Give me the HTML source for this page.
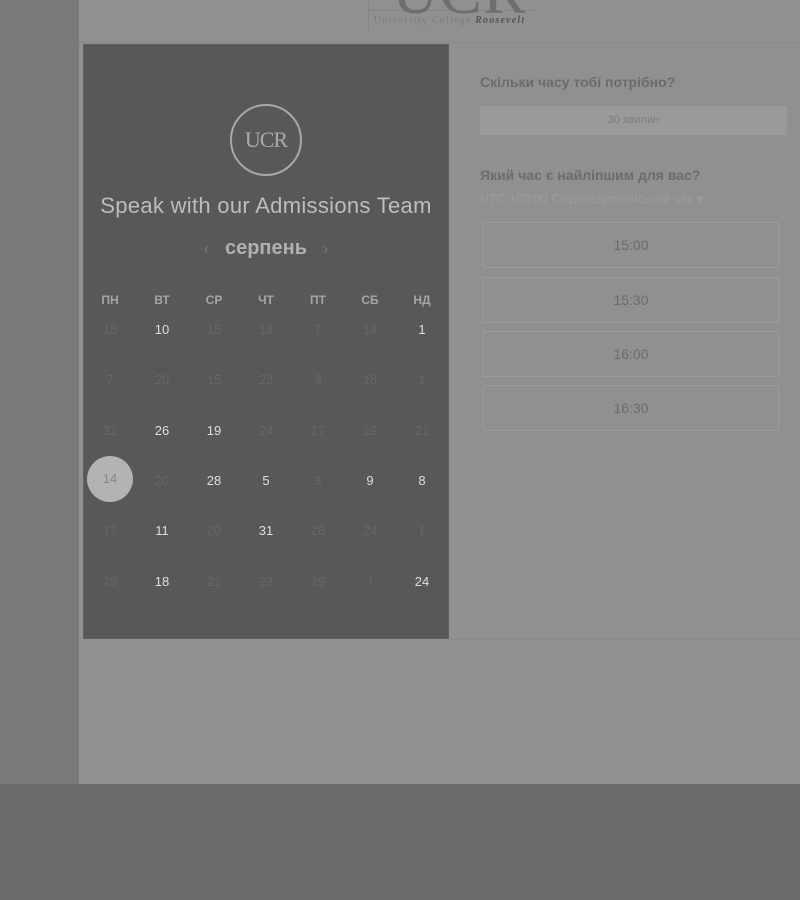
<!DOCTYPE html>
<html><head><meta charset="utf-8"><style>
*{margin:0;padding:0;box-sizing:border-box}
body{width:800px;height:900px;background:#6b6b6b;font-family:"Liberation Sans",sans-serif;position:relative;overflow:hidden}
.left{position:absolute;left:0;top:0;width:79px;height:784px;background:#7a7a7a}
.page{position:absolute;left:79px;top:0;width:721px;height:784px;background:#909090}
.hdr{position:absolute;left:79px;top:0;width:721px;height:43px;border-bottom:1px solid #8a8a8a}
.logo{position:absolute;left:392px;top:-45px;font-family:"Liberation Serif",serif;font-size:64px;color:#6e6e6e;letter-spacing:1px}
.lbox{position:absolute;left:368px;top:-2px;width:168px;height:13px;border-left:1px solid #858585;border-bottom:1px solid #858585}
.lside{position:absolute;left:368px;top:0;width:1px;height:30px;background:#858585}
.logo2{position:absolute;left:374px;top:15px;font-family:"Liberation Serif",serif;font-size:10px;color:#7c7c7c;letter-spacing:1.2px}
.logo2 i{color:#555;font-weight:bold}
.panel{position:absolute;left:83px;top:44px;width:366px;height:595px;background:#585858;border:1px solid #606060}
.circle{position:absolute;left:230px;top:104px;width:72px;height:72px;border:2px solid #a8a8a8;border-radius:50%;color:#aaa;font-family:"Liberation Serif",serif;font-size:22px;text-align:center;line-height:68px;letter-spacing:-1px}
.title{position:absolute;left:83px;width:366px;top:193px;text-align:center;color:#bdbdbd;font-size:22px;letter-spacing:0.3px}
.month{position:absolute;left:83px;width:366px;top:237px;text-align:center;color:#b0b0b0;font-size:20px;font-weight:bold}
.month span{color:#777;font-size:16px;margin:0 16px;font-weight:normal}
.dow,.d{position:absolute;width:40px;margin-left:-20px;text-align:center;font-size:12px}
.dow{top:293px;color:#a5a5a5;font-weight:bold}
.d{color:#666;font-size:13px}
.d.a{color:#dedede}
.sel{position:absolute;left:87px;top:456px;width:46px;height:46px;border-radius:50%;background:#b3b3b3;color:#888;font-size:13px;text-align:center;line-height:46px}
.rt{position:absolute;left:480px;color:#6c6c6c;font-size:14px;font-weight:bold}
.dur{position:absolute;left:480px;top:106px;width:307px;height:29px;background:#9a9a9a;color:#7e7e7e;font-size:11px;text-align:center;line-height:29px}
.tz{position:absolute;left:480px;top:191px;color:#9c9c9c;font-size:12.5px}
.slot{position:absolute;left:483px;width:296px;height:46px;border:1px solid #9c9c9c;border-radius:2px;color:#6c6c6c;font-size:14px;text-align:center;line-height:44px}
.sep{position:absolute;left:449px;top:639px;width:351px;height:1px;background:#8a8a8a}
</style></head><body>
<div class="left"></div><div class="page"></div>
<div class="hdr"></div>
<div class="lbox"></div><div class="lside"></div>
<div class="logo">UCR</div>
<div class="logo2">University College <i>Roosevelt</i></div>
<div class="panel"></div>
<div class="circle">UCR</div>
<div class="title">Speak with our Admissions Team</div>
<div class="month"><span>‹</span>серпень<span>›</span></div>
<div class="dow" style="left:110px">ПН</div><div class="dow" style="left:162px">ВТ</div><div class="dow" style="left:214px">СР</div><div class="dow" style="left:266px">ЧТ</div><div class="dow" style="left:318px">ПТ</div><div class="dow" style="left:370px">СБ</div><div class="dow" style="left:422px">НД</div>
<div class="d" style="left:110px;top:322px">18</div><div class="d a" style="left:162px;top:322px">10</div><div class="d" style="left:214px;top:322px">15</div><div class="d" style="left:266px;top:322px">19</div><div class="d" style="left:318px;top:322px">7</div><div class="d" style="left:370px;top:322px">14</div><div class="d a" style="left:422px;top:322px">1</div>
<div class="d" style="left:110px;top:372px">7</div><div class="d" style="left:162px;top:372px">20</div><div class="d" style="left:214px;top:372px">15</div><div class="d" style="left:266px;top:372px">23</div><div class="d" style="left:318px;top:372px">3</div><div class="d" style="left:370px;top:372px">18</div><div class="d" style="left:422px;top:372px">1</div>
<div class="d" style="left:110px;top:423px">31</div><div class="d a" style="left:162px;top:423px">26</div><div class="d a" style="left:214px;top:423px">19</div><div class="d" style="left:266px;top:423px">24</div><div class="d" style="left:318px;top:423px">17</div><div class="d" style="left:370px;top:423px">19</div><div class="d" style="left:422px;top:423px">21</div>
<div class="sel">14</div><div class="d" style="left:162px;top:473px">20</div><div class="d a" style="left:214px;top:473px">28</div><div class="d a" style="left:266px;top:473px">5</div><div class="d" style="left:318px;top:473px">3</div><div class="d a" style="left:370px;top:473px">9</div><div class="d a" style="left:422px;top:473px">8</div>
<div class="d" style="left:110px;top:523px">17</div><div class="d a" style="left:162px;top:523px">11</div><div class="d" style="left:214px;top:523px">20</div><div class="d a" style="left:266px;top:523px">31</div><div class="d" style="left:318px;top:523px">28</div><div class="d" style="left:370px;top:523px">24</div><div class="d" style="left:422px;top:523px">1</div>
<div class="d" style="left:110px;top:574px">28</div><div class="d a" style="left:162px;top:574px">18</div><div class="d" style="left:214px;top:574px">21</div><div class="d" style="left:266px;top:574px">23</div><div class="d" style="left:318px;top:574px">29</div><div class="d" style="left:370px;top:574px">7</div><div class="d a" style="left:422px;top:574px">24</div>
<div class="rt" style="top:74px">Скільки часу тобі потрібно?</div>
<div class="dur">30 хвилин</div>
<div class="rt" style="top:167px">Який час є найліпшим для вас?</div>
<div class="tz">UTC +03:00 Східноєвропейський час ▾</div>
<div class="slot" style="top:222px">15:00</div>
<div class="slot" style="top:277px">15:30</div>
<div class="slot" style="top:331px">16:00</div>
<div class="slot" style="top:385px">16:30</div>
<div class="sep"></div>
</body></html>
